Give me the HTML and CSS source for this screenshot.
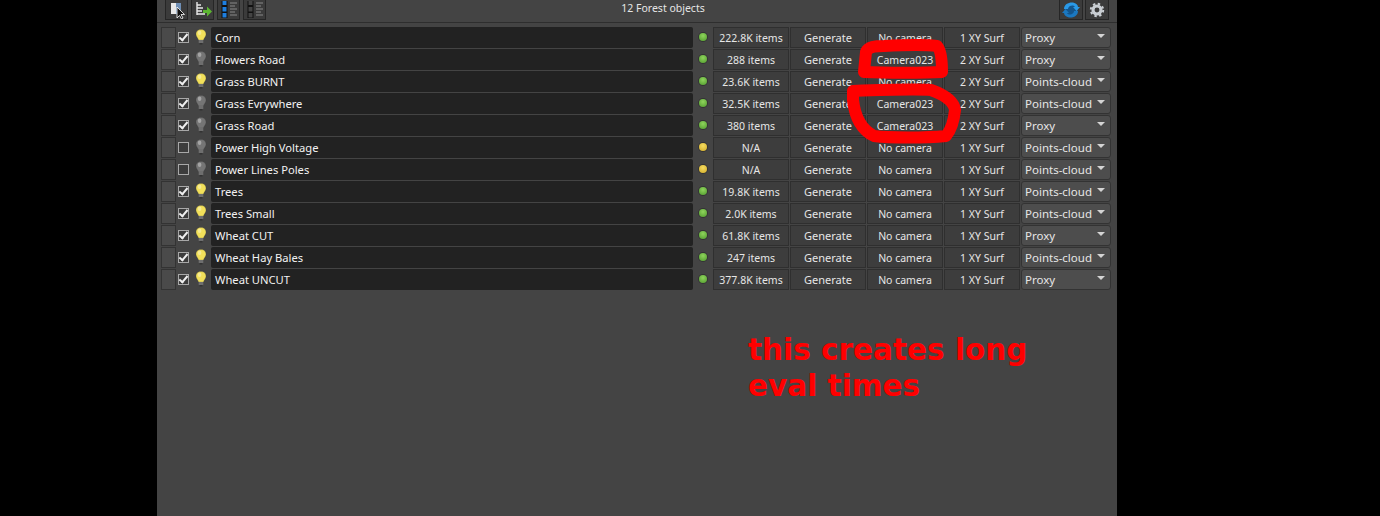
FILE: index.html
```
<!DOCTYPE html>
<html lang="en">
<head>
    <meta charset="UTF-8">
    <title>Forest objects</title>
    <link rel="stylesheet" href="styles.css">
</head>
<body>

    <svg class="defs" width="0" height="0">
        <symbol id="bulb" viewBox="0 0 12 16">
            <path d="M6 0.5C2.9 0.5 1 2.6 1 5.2C1 7.6 3 8.6 3.5 11H8.5C9 8.6 11 7.6 11 5.2C11 2.6 9.1 0.5 6 0.5Z" stroke="#333" stroke-opacity="0.35" stroke-width="0.6"/>
            <ellipse cx="4.6" cy="3.8" rx="1.8" ry="2.2" fill="#fff" fill-opacity="0.35"/>
            <rect x="3.7" y="11" width="4.6" height="3" fill="#6e6e6e"/>
            <rect x="4.7" y="14" width="2.6" height="1.5" fill="#333"/>
        </symbol>
    </svg>

    <div class="panel">
        <!-- Toolbar -->
        <div class="toolbar">
            <div class="tool-group">
                <div class="tool-btn">
                    <svg width="18" height="18" viewBox="0 0 18 18"><rect x="3" y="2" width="9" height="11" fill="#e8e8e8"/><rect x="8" y="2" width="5" height="11" fill="#6f8fb5"/><path d="M9 6V17L11.5 14.5L13.5 18L15 17L13 13.5H16.5Z" fill="#111" stroke="#fff" stroke-width="0.8"/></svg>
                </div>
                <div class="tool-btn">
                    <svg width="18" height="18" viewBox="0 0 18 18"><path d="M3 1V14M3 4H7M3 7H9M3 10H8M3 13H11" stroke="#e8e8e8" stroke-width="1.4" fill="none"/><path d="M9 9H13V5.5L18 10.5L13 15.5V12H9Z" fill="#5cb531"/></svg>
                </div>
                <div class="tool-btn">
                    <svg width="18" height="18" viewBox="0 0 18 18"><rect x="1.5" y="0" width="6" height="17" fill="#111"/><rect x="2.5" y="0" width="4" height="4" fill="#1e7fe0"/><rect x="2.5" y="6" width="4" height="4.5" fill="#1e7fe0"/><rect x="2.5" y="12" width="4" height="4.5" fill="#1e7fe0"/><path d="M10 2H17M10 5H15M10 8H17M10 11H15M10 14H17" stroke="#8a8a8a" stroke-width="1.2"/></svg>
                </div>
                <div class="tool-btn">
                    <svg width="18" height="18" viewBox="0 0 18 18"><rect x="1.5" y="0" width="6" height="17" fill="#111"/><rect x="2.5" y="0" width="4" height="4" fill="#444"/><rect x="2.5" y="6" width="4" height="4.5" fill="#444"/><rect x="2.5" y="12" width="4" height="4.5" fill="#444"/><path d="M10 2H17M10 5H15M10 8H17M10 11H15M10 14H17" stroke="#8a8a8a" stroke-width="1.2"/></svg>
                </div>
            </div>
            <div class="toolbar-title">12 Forest objects</div>
            <div class="tool-group tool-right">
                <div class="tool-btn">
                    <svg width="20" height="18" viewBox="0 0 20 18"><circle cx="10" cy="9" r="6.5" fill="#14558c"/><path d="M3 8C3 3 8 1 12 1.5C15 2 17 4 17 6L19 6L15.5 10L12 6H14C13.5 4.5 11 4 9 5C7 6 7 8 7 8Z" fill="#2a9ae8"/><path d="M17 10C17 15 12 17 8 16.5C5 16 3 14 3 12L1 12L4.5 8L8 12H6C6.5 13.5 9 14 11 13C13 12 13 10 13 10Z" fill="#1b78c0"/></svg>
                </div>
                <div class="tool-btn">
                    <svg width="16" height="16" viewBox="0 0 18 18"><circle cx="9" cy="9" r="4.5" fill="none" stroke="#c9ced3" stroke-width="3.5"/><circle cx="9" cy="9" r="7" fill="none" stroke="#c9ced3" stroke-width="2.2" stroke-dasharray="2.7 2.8"/></svg>
                </div>
            </div>
        </div>

        <!-- Object list -->
        <div class="list">
            <div class="row">
                <div class="swatch"></div><div class="check on"></div>
                <div class="lamp"><svg class="lit" width="12" height="16"><use href="#bulb"/></svg></div>
                <div class="name">Corn</div>
                <div class="status"><span class="dot green"></span></div>
                <div class="cell">222.8K items</div><div class="cell action">Generate</div><div class="cell">No camera</div><div class="cell">1 XY Surf</div>
                <div class="select">Proxy</div>
            </div>
            <div class="row">
                <div class="swatch"></div><div class="check on"></div>
                <div class="lamp"><svg class="unlit" width="12" height="16"><use href="#bulb"/></svg></div>
                <div class="name">Flowers Road</div>
                <div class="status"><span class="dot green"></span></div>
                <div class="cell">288 items</div><div class="cell action">Generate</div><div class="cell">Camera023</div><div class="cell">2 XY Surf</div>
                <div class="select">Proxy</div>
            </div>
            <div class="row">
                <div class="swatch"></div><div class="check on"></div>
                <div class="lamp"><svg class="lit" width="12" height="16"><use href="#bulb"/></svg></div>
                <div class="name">Grass BURNT</div>
                <div class="status"><span class="dot green"></span></div>
                <div class="cell">23.6K items</div><div class="cell action">Generate</div><div class="cell">No camera</div><div class="cell">2 XY Surf</div>
                <div class="select">Points-cloud</div>
            </div>
            <div class="row">
                <div class="swatch"></div><div class="check on"></div>
                <div class="lamp"><svg class="unlit" width="12" height="16"><use href="#bulb"/></svg></div>
                <div class="name">Grass Evrywhere</div>
                <div class="status"><span class="dot green"></span></div>
                <div class="cell">32.5K items</div><div class="cell action">Generate</div><div class="cell">Camera023</div><div class="cell">2 XY Surf</div>
                <div class="select">Points-cloud</div>
            </div>
            <div class="row">
                <div class="swatch"></div><div class="check on"></div>
                <div class="lamp"><svg class="unlit" width="12" height="16"><use href="#bulb"/></svg></div>
                <div class="name">Grass Road</div>
                <div class="status"><span class="dot green"></span></div>
                <div class="cell">380 items</div><div class="cell action">Generate</div><div class="cell">Camera023</div><div class="cell">2 XY Surf</div>
                <div class="select">Proxy</div>
            </div>
            <div class="row">
                <div class="swatch"></div><div class="check"></div>
                <div class="lamp"><svg class="unlit" width="12" height="16"><use href="#bulb"/></svg></div>
                <div class="name">Power High Voltage</div>
                <div class="status"><span class="dot yellow"></span></div>
                <div class="cell">N/A</div><div class="cell action">Generate</div><div class="cell">No camera</div><div class="cell">1 XY Surf</div>
                <div class="select">Points-cloud</div>
            </div>
            <div class="row">
                <div class="swatch"></div><div class="check"></div>
                <div class="lamp"><svg class="unlit" width="12" height="16"><use href="#bulb"/></svg></div>
                <div class="name">Power Lines Poles</div>
                <div class="status"><span class="dot yellow"></span></div>
                <div class="cell">N/A</div><div class="cell action">Generate</div><div class="cell">No camera</div><div class="cell">1 XY Surf</div>
                <div class="select">Points-cloud</div>
            </div>
            <div class="row">
                <div class="swatch"></div><div class="check on"></div>
                <div class="lamp"><svg class="lit" width="12" height="16"><use href="#bulb"/></svg></div>
                <div class="name">Trees</div>
                <div class="status"><span class="dot green"></span></div>
                <div class="cell">19.8K items</div><div class="cell action">Generate</div><div class="cell">No camera</div><div class="cell">1 XY Surf</div>
                <div class="select">Points-cloud</div>
            </div>
            <div class="row">
                <div class="swatch"></div><div class="check on"></div>
                <div class="lamp"><svg class="lit" width="12" height="16"><use href="#bulb"/></svg></div>
                <div class="name">Trees Small</div>
                <div class="status"><span class="dot green"></span></div>
                <div class="cell">2.0K items</div><div class="cell action">Generate</div><div class="cell">No camera</div><div class="cell">1 XY Surf</div>
                <div class="select">Points-cloud</div>
            </div>
            <div class="row">
                <div class="swatch"></div><div class="check on"></div>
                <div class="lamp"><svg class="lit" width="12" height="16"><use href="#bulb"/></svg></div>
                <div class="name">Wheat CUT</div>
                <div class="status"><span class="dot green"></span></div>
                <div class="cell">61.8K items</div><div class="cell action">Generate</div><div class="cell">No camera</div><div class="cell">1 XY Surf</div>
                <div class="select">Proxy</div>
            </div>
            <div class="row">
                <div class="swatch"></div><div class="check on"></div>
                <div class="lamp"><svg class="lit" width="12" height="16"><use href="#bulb"/></svg></div>
                <div class="name">Wheat Hay Bales</div>
                <div class="status"><span class="dot green"></span></div>
                <div class="cell">247 items</div><div class="cell action">Generate</div><div class="cell">No camera</div><div class="cell">1 XY Surf</div>
                <div class="select">Points-cloud</div>
            </div>
            <div class="row">
                <div class="swatch"></div><div class="check on"></div>
                <div class="lamp"><svg class="lit" width="12" height="16"><use href="#bulb"/></svg></div>
                <div class="name">Wheat UNCUT</div>
                <div class="status"><span class="dot green"></span></div>
                <div class="cell">377.8K items</div><div class="cell action">Generate</div><div class="cell">No camera</div><div class="cell">1 XY Surf</div>
                <div class="select">Proxy</div>
            </div>
        </div>

        <!-- Annotation painted on top of the screenshot -->
        <svg class="scribble" width="960" height="516" viewBox="157 0 960 516">
            <path d="M864 72L866 52C868 47 875 46 884 46C905 45 928 45 937 46C941 50 942 62 942 72C925 73 885 73 864 72Z"/>
            <path d="M853 91C880 90 915 89 931 90C945 95 954 102 955 110C954 120 951 130 946 136C925 138 890 138 874 136C862 130 855 118 853 100Z"/>
        </svg>
        <div class="note">this creates long<br>eval times</div>
    </div>

</body>
</html>
```

FILE: styles.css
```
body {
    margin: 0;
    background-color: #000;
    font-family: "Noto Sans", "Open Sans", sans-serif;
    font-size: 11px;
    color: #e6e6e6;
}

.defs {
    position: absolute;
}

.panel {
    position: relative;
    width: 960px;
    height: 516px;
    margin-left: 157px;
    background-color: #444;
    overflow: hidden;
}

.toolbar {
    display: flex;
    justify-content: space-between;
    height: 22px;
    padding: 0 8px;
    border-bottom: 1px solid #2e2e2e;
}

.tool-group {
    display: flex;
    gap: 3px;
    width: 200px;
}

.tool-right {
    justify-content: flex-end;
    gap: 2px;
}

.tool-btn {
    display: flex;
    align-items: center;
    justify-content: center;
    width: 23px;
    height: 20px;
    box-sizing: border-box;
    background-color: #3b3b3b;
    border: 1px solid #262626;
    border-top: none;
    overflow: hidden;
}

.tool-right .tool-btn {
    width: 24px;
}

.toolbar-title {
    line-height: 16px;
    font-size: 10.5px;
    position: relative;
    left: 26px;
}

.list {
    display: flex;
    flex-direction: column;
    gap: 1px;
    padding: 4px 0 0 4px;
}

.row {
    display: grid;
    grid-template-columns: 16px 12px 19px 482px 18px 76px 76px 76px 76px 90px;
    grid-template-rows: 21px;
    gap: 1px;
    height: 21px;
    line-height: 21px;
}

.swatch {
    background-color: #4a4a4a;
    border: 1px solid #333;
    box-sizing: border-box;
    margin-right: 1px;
}

.check {
    position: relative;
    width: 9px;
    height: 9px;
    margin: 5px 0 0 0;
    border: 1px solid #a8a8a8;
    background-color: #3c3c3c;
}

.check.on::after {
    content: "";
    position: absolute;
    left: 2px;
    top: -1px;
    width: 3px;
    height: 7px;
    border: solid #f0f0f0;
    border-width: 0 2px 2px 0;
    transform: rotate(40deg);
}

.lamp {
    display: flex;
    justify-content: center;
    padding-top: 2px;
}

.lit {
    fill: #f2e05a;
}

.unlit {
    fill: #757575;
}

.name {
    padding-left: 4px;
    background-color: #222;
    border-radius: 2px;
    font-size: 11.2px;
    color: #f2f2f2;
}

.status {
    display: flex;
    align-items: center;
    justify-content: center;
}

.dot {
    width: 8px;
    height: 8px;
    margin-top: -2px;
    border-radius: 50%;
    box-shadow: 0 0 0 1px #333;
}

.dot.green {
    background: radial-gradient(circle at 50% 35%, #8fd45c, #4f9a2c);
}

.dot.yellow {
    background: radial-gradient(circle at 50% 35%, #f5dc60, #d0aa28);
}

.cell {
    background-color: #3d3d3d;
    border: 1px solid #2f2f2f;
    box-sizing: border-box;
    font-size: 10.5px;
    line-height: 20px;
    text-align: center;
}

.cell.action {
    font-size: 11px;
    line-height: 19px;
}

.select {
    position: relative;
    padding-left: 3px;
    background-color: #4d4d4d;
    border: 1px solid #333;
    border-radius: 3px;
    box-sizing: border-box;
    font-size: 11.5px;
    line-height: 19px;
}

.select::after {
    content: "";
    position: absolute;
    right: 5px;
    top: 6px;
    border: 4px solid transparent;
    border-top: 4px solid #d4d4d4;
    border-bottom: none;
}

.scribble {
    position: absolute;
    left: 0;
    top: 0;
}

.scribble path {
    fill: none;
    stroke: #f00;
    stroke-width: 12;
    stroke-linejoin: round;
}

.note {
    position: absolute;
    left: 591px;
    top: 332px;
    font-family: "DejaVu Sans", sans-serif;
    font-size: 29.5px;
    font-weight: bold;
    line-height: 36px;
    color: #f00;
}
```
